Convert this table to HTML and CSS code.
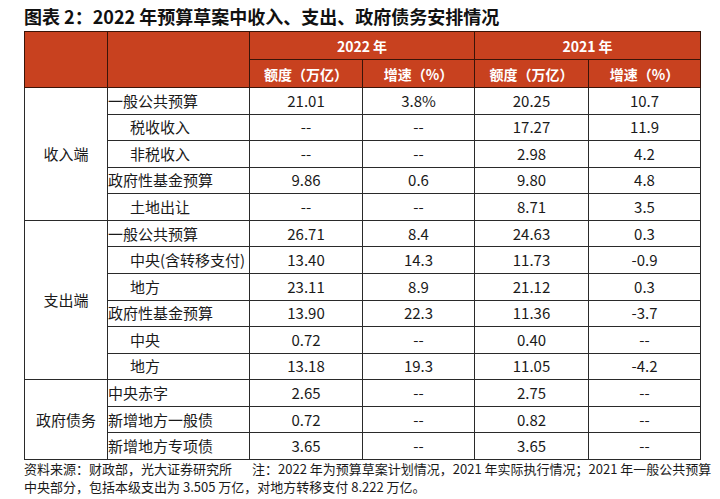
FILE: index.html
```html
<!DOCTYPE html>
<html lang="zh-CN">
<head>
<meta charset="utf-8">
<title>图表 2</title>
<link rel="stylesheet" href="styles.css">
</head>
<body>
<div class="page">
  <h1 class="title">图表 2：2022 年预算草案中收入、支出、政府债务安排情况</h1>
  <table class="data">
    <colgroup>
      <col class="c-cat"><col class="c-item"><col class="c-n1"><col class="c-n2"><col class="c-n3"><col class="c-n4">
    </colgroup>
    <thead>
      <tr class="h1">
        <th rowspan="2"></th>
        <th rowspan="2"></th>
        <th colspan="2">2022 年</th>
        <th colspan="2">2021 年</th>
      </tr>
      <tr class="h2">
        <th>额度（万亿）</th>
        <th>增速（%）</th>
        <th>额度（万亿）</th>
        <th>增速（%）</th>
      </tr>
    </thead>
    <tbody>
      <tr><td class="cat" rowspan="5">收入端</td><td class="item">一般公共预算</td><td>21.01</td><td>3.8%</td><td>20.25</td><td>10.7</td></tr>
      <tr><td class="item sub">税收收入</td><td>--</td><td>--</td><td>17.27</td><td>11.9</td></tr>
      <tr><td class="item sub">非税收入</td><td>--</td><td>--</td><td>2.98</td><td>4.2</td></tr>
      <tr><td class="item">政府性基金预算</td><td>9.86</td><td>0.6</td><td>9.80</td><td>4.8</td></tr>
      <tr><td class="item sub">土地出让</td><td>--</td><td>--</td><td>8.71</td><td>3.5</td></tr>
      <tr><td class="cat" rowspan="6">支出端</td><td class="item">一般公共预算</td><td>26.71</td><td>8.4</td><td>24.63</td><td>0.3</td></tr>
      <tr><td class="item sub">中央(含转移支付)</td><td>13.40</td><td>14.3</td><td>11.73</td><td>-0.9</td></tr>
      <tr><td class="item sub">地方</td><td>23.11</td><td>8.9</td><td>21.12</td><td>0.3</td></tr>
      <tr><td class="item">政府性基金预算</td><td>13.90</td><td>22.3</td><td>11.36</td><td>-3.7</td></tr>
      <tr><td class="item sub">中央</td><td>0.72</td><td>--</td><td>0.40</td><td>--</td></tr>
      <tr><td class="item sub">地方</td><td>13.18</td><td>19.3</td><td>11.05</td><td>-4.2</td></tr>
      <tr><td class="cat" rowspan="3">政府债务</td><td class="item">中央赤字</td><td>2.65</td><td>--</td><td>2.75</td><td>--</td></tr>
      <tr><td class="item">新增地方一般债</td><td>0.72</td><td>--</td><td>0.82</td><td>--</td></tr>
      <tr><td class="item">新增地方专项债</td><td>3.65</td><td>--</td><td>3.65</td><td>--</td></tr>
    </tbody>
  </table>
  <p class="note"><span class="src">资料来源：财政部，光大证券研究所</span><span class="memo">注：2022 年为预算草案计划情况，2021 年实际执行情况；2021 年一般公共预算</span><br>中央部分，包括本级支出为 3.505 万亿，对地方转移支付 8.222 万亿。</p>
</div>
</body>
</html>
```

FILE: styles.css
```css
html, body {
  margin: 0;
  padding: 0;
  background: #ffffff;
}

body {
  font-family: "Noto Sans CJK SC", "Noto Sans", sans-serif;
  color: #1a1a1a;
}

.page {
  padding: 4px 0 0 24px;
  width: 696px;
}

.title {
  margin: 0 0 3px 0;
  font-size: 18px;
  line-height: 24px;
  font-weight: 700;
  color: #111111;
  white-space: nowrap;
}

.data {
  border-collapse: collapse;
  table-layout: fixed;
  width: 676px;
  font-size: 15px;
}

.c-cat { width: 83px; }
.c-item { width: 142px; }
.c-n1 { width: 113px; }
.c-n2 { width: 112px; }
.c-n3 { width: 114px; }
.c-n4 { width: 112px; }

.data th,
.data td {
  border: 1px solid #2a2a2a;
  padding: 0;
  text-align: center;
  vertical-align: middle;
  white-space: nowrap;
}

.data thead th {
  background: #c8411f;
  color: #ffffff;
  font-size: 14px;
  font-weight: 700;
  border-color: #3a1408;
  height: 27px;
  line-height: 20px;
}

.data tbody tr {
  height: 26.57px;
}

.data tbody td {
  line-height: 20px;
  color: #1a1a1a;
}

.data td.item {
  text-align: left;
}

.data td.sub {
  padding-left: 22px;
}

.data td.cat {
  text-align: center;
}

.note {
  margin: 0;
  font-size: 13px;
  line-height: 18px;
  color: #1a1a1a;
  white-space: nowrap;
}

.memo {
  margin-left: 20px;
}
```
